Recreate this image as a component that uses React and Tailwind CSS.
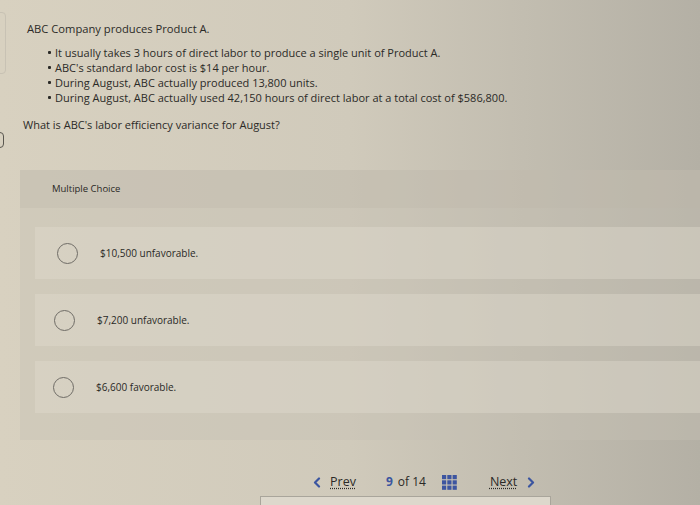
import React from "react";

function Radio() {
  return <div className="w-[21px] h-[21px] rounded-full border border-[#6f6c66] shrink-0" />;
}

function Option({ text, pl }) {
  return (
    <div className={`h-[52px] flex items-center ${pl} bg-[#e2ddd0]/40`}>
      <Radio />
      <span className="ml-[22px] text-[10px] text-[#2a2926]">{text}</span>
    </div>
  );
}

function Bullet({ children }) {
  return (
    <div className="flex items-center">
      <span className="w-[3px] h-[3px] bg-[#2b2a27] rounded-[1px] mr-[4px]" />
      <span>{children}</span>
    </div>
  );
}

function Chevron({ dir }) {
  return (
    <svg width="8" height="11" viewBox="0 0 8 11">
      <path
        d={dir === "left" ? "M6 1.5 L2 5.5 L6 9.5" : "M2 1.5 L6 5.5 L2 9.5"}
        fill="none"
        stroke="#3b55a0"
        strokeWidth="2.2"
        strokeLinecap="round"
        strokeLinejoin="round"
      />
    </svg>
  );
}

export default function App() {
  return (
    <div
      className="w-[700px] h-[505px] overflow-hidden relative bg-linear-to-r from-[#d8d1c0] via-[#d0cabb] to-[#b4b0a5] text-[#2b2a27]"
      style={{ fontFamily: "'Open Sans', Lato, sans-serif" }}
    >
      <div className="absolute left-[-4px] top-[12px] w-[10px] h-[62px] border border-[#c8c2b4] rounded-sm" />
      <div className="absolute left-[-6px] top-[132px] w-[10px] h-[16px] border border-[#5a5750] rounded-sm" />

      <div className="pt-[21px] pl-[27px] text-[11.2px] leading-[15px]">ABC Company produces Product A.</div>
      <div className="mt-[9px] pl-[48px] text-[11px] leading-[15px] flex flex-col">
        <Bullet>It usually takes 3 hours of direct labor to produce a single unit of Product A.</Bullet>
        <Bullet>ABC's standard labor cost is $14 per hour.</Bullet>
        <Bullet>During August, ABC actually produced 13,800 units.</Bullet>
        <Bullet>During August, ABC actually used 42,150 hours of direct labor at a total cost of $586,800.</Bullet>
      </div>
      <div className="mt-[12px] pl-[23px] text-[11px] leading-[15px]">What is ABC's labor efficiency variance for August?</div>

      <div className="mt-[38px] ml-[20px] h-[270px] bg-[#c6c1b4]/40 flex flex-col">
        <div className="h-[38px] bg-[#bcb7aa]/30 flex items-center pl-[32px] text-[9.5px] text-[#2a2926]">Multiple Choice</div>
        <div className="pt-[19px] pl-[15px] flex flex-col gap-[15px]">
          <Option text="$10,500 unfavorable." pl="pl-[22px]" />
          <Option text="$7,200 unfavorable." pl="pl-[19px]" />
          <Option text="$6,600 favorable." pl="pl-[18px]" />
        </div>
      </div>

      <div className="mt-[33px] flex items-center text-[12.5px]">
        <div className="ml-[313px] flex items-center gap-[9px]">
          <Chevron dir="left" />
          <span className="underline decoration-dotted underline-offset-2">Prev</span>
        </div>
        <div className="ml-[30px] flex items-center gap-[5px] text-[12px]">
          <span className="text-[#3b55a0] font-bold">9</span>
          <span>of 14</span>
        </div>
        <svg className="ml-[16px]" width="15" height="15" viewBox="0 0 15 15">
          {[0, 5.3, 10.6].map((x) =>
            [0, 5.3, 10.6].map((y) => (
              <rect key={`${x}-${y}`} x={x} y={y} width="4.2" height="4.2" fill="#3d55a0" />
            ))
          )}
        </svg>
        <div className="ml-[33px] flex items-center gap-[10px]">
          <span className="underline decoration-dotted underline-offset-2">Next</span>
          <Chevron dir="right" />
        </div>
      </div>
      <div className="absolute left-[260px] top-[496px] w-[291px] h-[20px] bg-[#ddd8cc] border border-[#a9a59b]" />
    </div>
  );
}
